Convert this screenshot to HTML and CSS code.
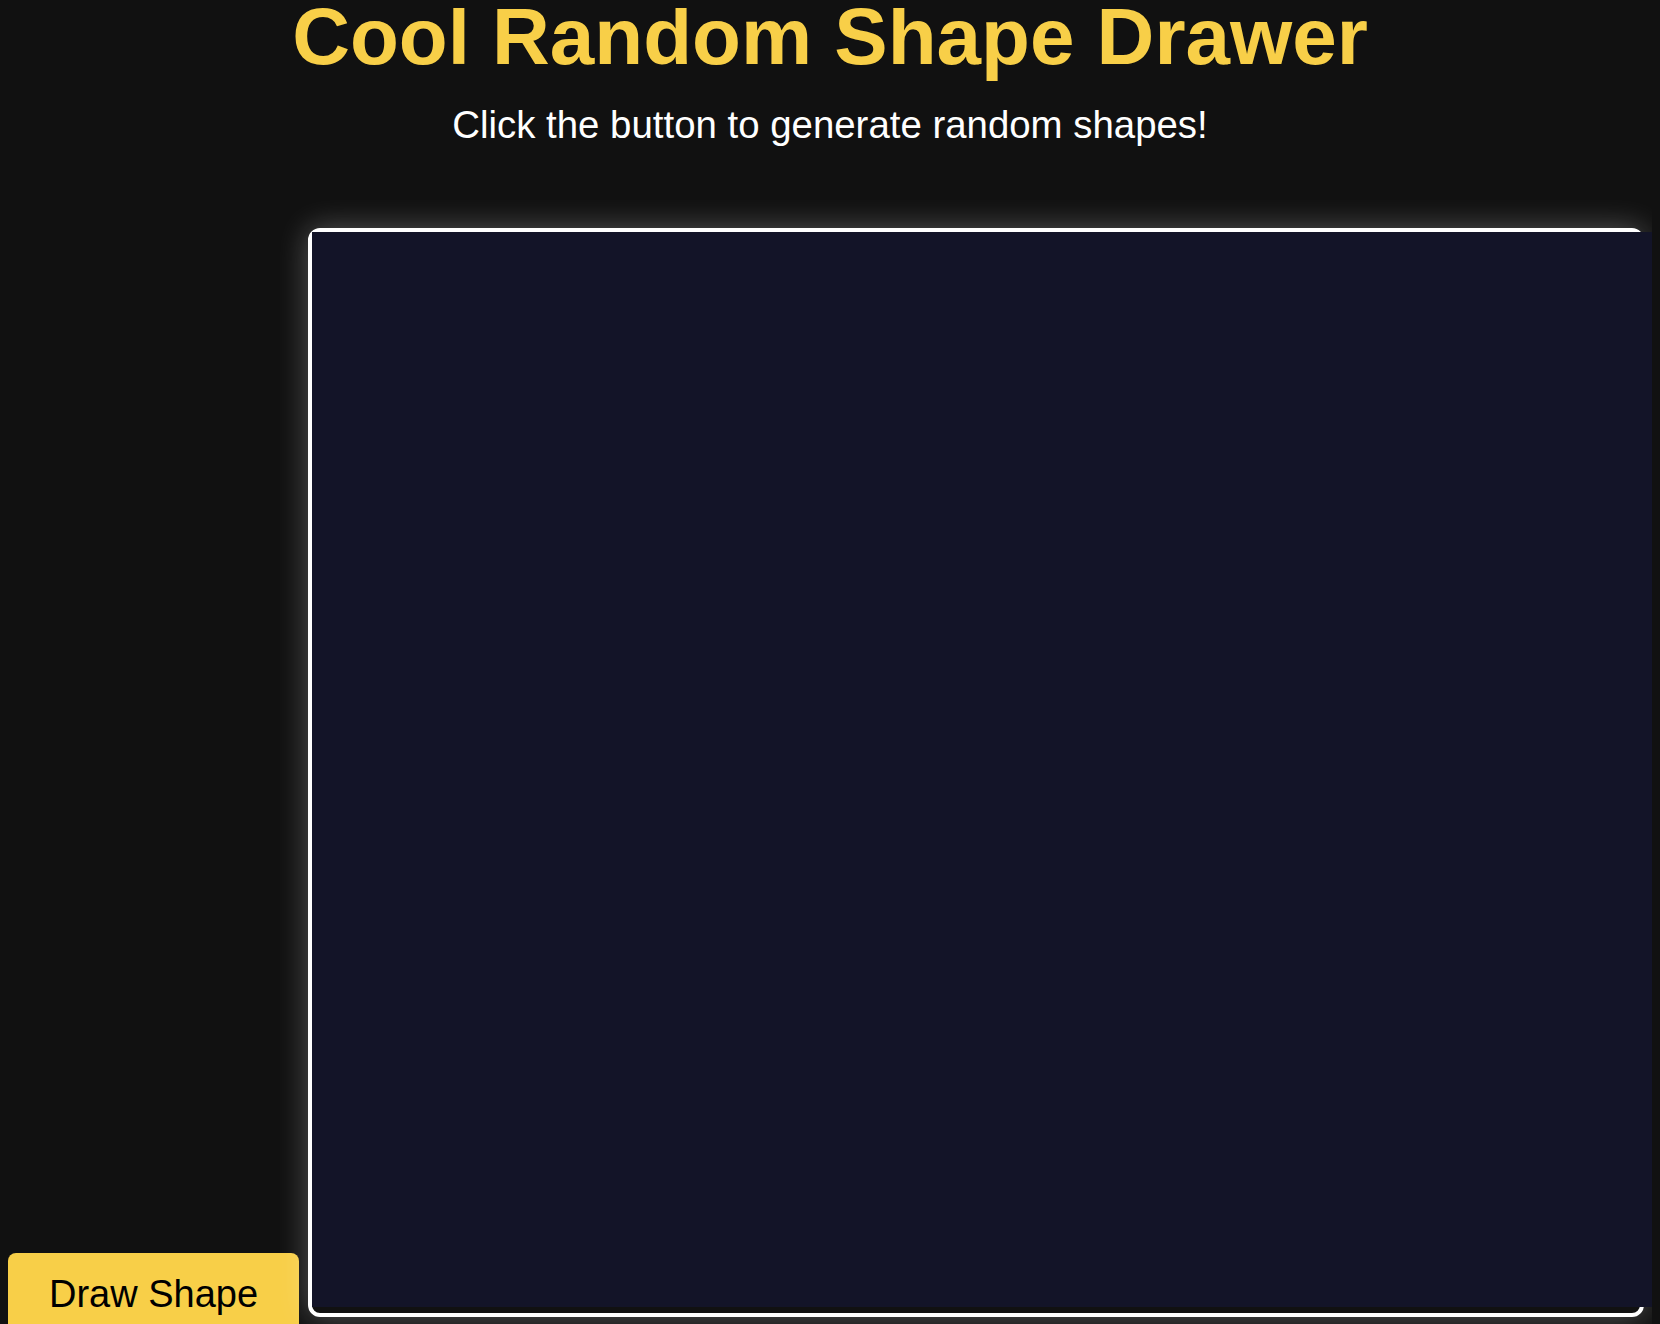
FILE: index.html
```html
<!DOCTYPE html>
<html lang="en">
<head>
<meta charset="utf-8">
<title>Cool Random Shape Drawer</title>
<link rel="stylesheet" href="styles.css">
</head>
<body>
<header class="header">
  <h1 class="title">Cool Random Shape Drawer</h1>
  <p class="subtitle">Click the button to generate random shapes!</p>
</header>
<main class="stage">
  <button class="draw-btn" type="button">Draw Shape</button>
  <div class="canvas-frame"><canvas class="board" width="1348" height="1075"></canvas></div>
</main>
</body>
</html>
```
FILE: styles.css
```css
html, body {
  background: #111111;
}
body {
  margin: 8px;
  font-family: "Liberation Sans", Arial, sans-serif;
  color: #ffffff;
}
.header {
  text-align: center;
}
.title {
  margin: -11px 0 0;
  font-size: 80px;
  line-height: 80px;
  font-weight: 700;
  color: #f8cf48;
}
.subtitle {
  margin: 26px 0 0;
  font-size: 38.4px;
  line-height: 44px;
}
.stage {
  display: flex;
  align-items: baseline;
  gap: 9px;
  margin-top: 81px;
}
.draw-btn {
  flex: none;
  width: 291px;
  padding: 20px 0;
  border: 0;
  border-radius: 8px;
  background: #f8cf48;
  color: #000000;
  font-family: inherit;
  font-size: 38px;
  line-height: normal;
}
.canvas-frame {
  flex: none;
  width: 1328px;
  padding-bottom: 6px;
  border: 4px solid #ffffff;
  border-radius: 12px;
  box-shadow: 0 0 30px rgba(255, 255, 255, 0.3);
  line-height: 0;
}
.board {
  width: 1348px;
  height: 1075px;
  background: #131428;
  vertical-align: baseline;
}
```
